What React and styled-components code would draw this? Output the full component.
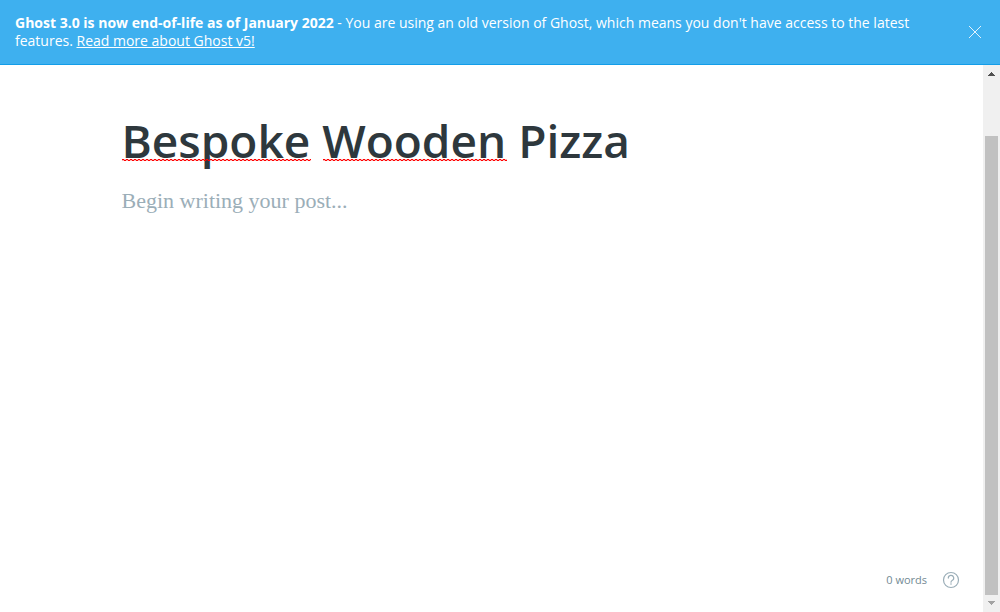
import React, { useLayoutEffect, useRef, useState } from "react";
import styled, { createGlobalStyle } from "styled-components";

const GlobalStyle = createGlobalStyle`
  *, *::before, *::after { box-sizing: border-box; }
  body {
    margin: 0;
    background: #fff;
    color: #2e383d;
    font-family: "Segoe UI", "Open Sans", "Noto Sans", sans-serif;
  }
`;

const Page = styled.div`
  display: flex;
  flex-direction: column;
  min-height: 100vh;
`;

const Banner = styled.aside`
  display: flex;
  align-items: center;
  justify-content: space-between;
  gap: 16px;
  padding: 14px 15px;
  background: #3eb0ef;
  border-bottom: 1px solid #139de8;
  color: #fff;
`;

const BannerText = styled.p`
  margin: 0;
  font-size: 14px;
  line-height: 18px;
`;

const BannerLink = styled.a`
  color: inherit;
  text-decoration: underline;
`;

const IconButton = styled.button`
  display: flex;
  flex: none;
  padding: 0;
  border: 0;
  background: none;
  color: ${({ $color }) => $color};
  cursor: pointer;
`;

const Workspace = styled.div`
  display: flex;
  flex: 1;
`;

const Editor = styled.main`
  display: flex;
  flex: 1;
  flex-direction: column;
  min-width: 0;
`;

const Post = styled.div`
  display: flex;
  flex: 1;
  flex-direction: column;
  gap: 14px;
  width: 100%;
  max-width: 740px;
  margin: 0 auto;
  padding-top: 42px;
`;

const TitleField = styled.div`
  position: relative;
  display: flex;
`;

const TitleInput = styled.input`
  width: 100%;
  height: 66px;
  padding: 0;
  border: 0;
  outline: 0;
  background: none;
  color: #2e383d;
  font-family: inherit;
  font-size: 46px;
  font-weight: 600;
`;

const SpellingMark = styled.svg`
  position: absolute;
  bottom: 12px;
  height: 2px;
  pointer-events: none;
`;

const BodyInput = styled.textarea`
  flex: 1;
  width: 100%;
  padding: 0;
  border: 0;
  outline: 0;
  resize: none;
  background: none;
  color: #2e383d;
  font-family: Georgia, "Liberation Serif", serif;
  font-size: 22px;
  line-height: 28px;

  &::placeholder {
    color: #9baeb8;
    opacity: 1;
  }
`;

const StatusBar = styled.footer`
  display: flex;
  align-items: center;
  justify-content: flex-end;
  gap: 15px;
  padding: 0 23px 23px;
  color: #738a94;
  font-size: 11px;
  line-height: 18px;
`;

const ScrollBar = styled.div`
  display: flex;
  flex: none;
  flex-direction: column;
  width: 17px;
  background: #f0f0f0;
`;

const ScrollButton = styled.button`
  display: flex;
  align-items: center;
  justify-content: center;
  height: 17px;
  padding: 0;
  border: 0;
  background: none;
  color: ${({ $color }) => $color};
`;

const ScrollTrack = styled.div`
  display: grid;
  flex: 1;
  grid-template-rows: 54fr 459fr;
  padding: 0 2px;
`;

const ScrollThumb = styled.div`
  grid-row: 2;
  background: #c1c1c1;
`;

const FLAGGED_WORDS = ["Bespoke", "Wooden"];

function measureMarks(input) {
  const style = getComputedStyle(input);
  const context = document.createElement("canvas").getContext("2d");
  context.font = `${style.fontWeight} ${style.fontSize} ${style.fontFamily}`;
  return FLAGGED_WORDS.filter((word) => input.value.includes(word)).map((word) => {
    const before = input.value.slice(0, input.value.indexOf(word));
    return {
      word,
      left: Math.round(context.measureText(before).width),
      width: Math.round(context.measureText(word).width),
    };
  });
}

function Title() {
  const [title, setTitle] = useState("Bespoke Wooden Pizza");
  const [marks, setMarks] = useState([]);
  const input = useRef(null);

  useLayoutEffect(() => setMarks(measureMarks(input.current)), [title]);

  return (
    <TitleField>
      <TitleInput
        ref={input}
        aria-label="Post title"
        spellCheck={false}
        value={title}
        onChange={(event) => setTitle(event.target.value)}
      />
      {marks.map(({ word, left, width }) => (
        <SpellingMark key={word} style={{ left, width }} aria-hidden="true">
          <defs>
            <pattern id={`wave-${word}`} width="4" height="2" patternUnits="userSpaceOnUse">
              <path d="M0 0h2v1H0zM2 1h2v1H2z" fill="#f00" />
              <path d="M2 0h2v1H2zM0 1h2v1H0z" fill="#f00" fillOpacity=".3" />
            </pattern>
          </defs>
          <rect width="100%" height="2" fill={`url(#wave-${word})`} />
        </SpellingMark>
      ))}
    </TitleField>
  );
}

export default function App() {
  const [bannerOpen, setBannerOpen] = useState(true);
  const [body, setBody] = useState("");
  const words = body.split(/\s+/).filter(Boolean).length;

  return (
    <>
      <GlobalStyle />
      <Page>
        {bannerOpen && (
          <Banner>
            <BannerText>
              <strong>Ghost 3.0 is now end-of-life as of January 2022</strong> - You are using an
              old version of Ghost, which means you don't have access to the latest features.{" "}
              <BannerLink href="#ghost-v5">Read more about Ghost v5!</BannerLink>
            </BannerText>
            <IconButton
              type="button"
              $color="#e2f3fd"
              aria-label="Dismiss"
              onClick={() => setBannerOpen(false)}
            >
              <svg width="20" height="14" viewBox="0 0 20 14" fill="none" stroke="currentColor">
                <path d="M4 1l12 12M16 1L4 13" />
              </svg>
            </IconButton>
          </Banner>
        )}
        <Workspace>
          <Editor>
            <Post>
              <Title />
              <BodyInput
                aria-label="Post body"
                placeholder="Begin writing your post..."
                value={body}
                onChange={(event) => setBody(event.target.value)}
              />
            </Post>
            <StatusBar>
              <span>{words} words</span>
              <IconButton type="button" $color="#9baeb8" aria-label="Help">
                <svg
                  width="18"
                  height="18"
                  viewBox="0 0 18 18"
                  fill="none"
                  stroke="currentColor"
                  strokeWidth="1.2"
                >
                  <circle cx="9" cy="9" r="7.5" />
                  <path d="M6.3 7.1a2.7 2.7 0 1 1 3.8 2.4c-.8.4-1.1.8-1.1 1.7" strokeLinecap="round" />
                  <circle cx="9" cy="13" r=".8" fill="currentColor" stroke="none" />
                </svg>
              </IconButton>
            </StatusBar>
          </Editor>
          <ScrollBar>
            <ScrollButton type="button" $color="#505050" aria-label="Scroll up">
              <svg width="7" height="4" viewBox="0 0 7 4" fill="currentColor">
                <path d="M3 0h1v1h1v1h1v1h1v1H0V3h1V2h1V1h1z" />
              </svg>
            </ScrollButton>
            <ScrollTrack>
              <ScrollThumb />
            </ScrollTrack>
            <ScrollButton type="button" $color="#a3a3a3" aria-label="Scroll down">
              <svg width="7" height="5" viewBox="0 0 7 5" fill="currentColor">
                <path d="M0 0h7v1H6v1H5v1H4v1H3V3H2V2H1V1H0z" />
              </svg>
            </ScrollButton>
          </ScrollBar>
        </Workspace>
      </Page>
    </>
  );
}
